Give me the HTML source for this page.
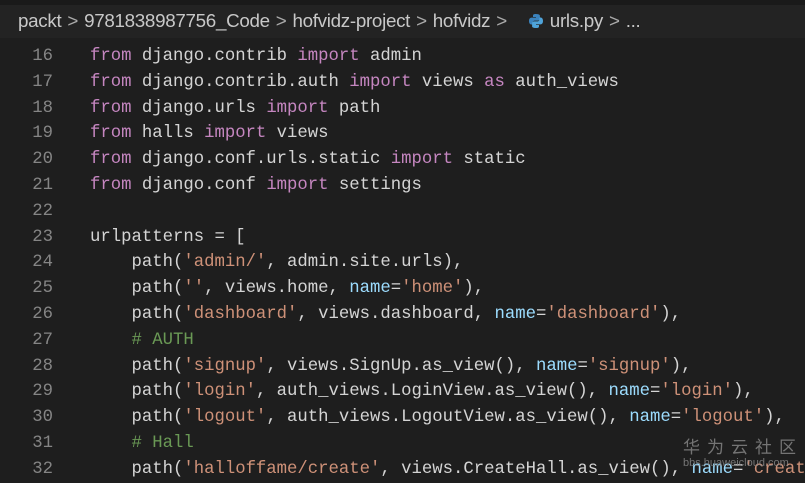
<!DOCTYPE html>
<html><head><style>
body{margin:0;width:805px;height:474px;overflow:hidden;background:#1e1e1e;font-family:"Liberation Mono",monospace;position:relative}
.top{position:absolute;left:0;top:0;width:805px;height:5px;background:#1a1a1a}
.bc{position:absolute;left:0;top:5px;width:805px;height:33px;background:#232323;color:#c8c8c8;font:18.8px "Liberation Sans",sans-serif;line-height:32px;white-space:nowrap;padding-left:18px;box-sizing:border-box;letter-spacing:-0.3px}
.bc .s{color:#aaa;margin:0 6px}
.code{position:absolute;left:0;top:44px;width:805px;overflow:hidden;font-size:17.3px;line-height:25.8px;color:#d4d4d4;white-space:pre}
.ln{display:inline-block;width:53px;text-align:right;color:#858585;margin-right:37px}
.k{color:#c586c0}.s2{color:#ce9178}.p{color:#9cdcfe}.c{color:#6a9955}
.wm{position:absolute;left:683px;top:433px;color:#8a8a8a;font:17px "Noto Sans CJK SC",sans-serif;letter-spacing:7px;opacity:.8}
.wm2{position:absolute;left:683px;top:457px;color:#8a8a8a;font:11px "Liberation Sans",sans-serif;opacity:.8}
</style></head><body>
<div class="top"></div>
<div class="bc">packt<span class="s">&gt;</span>9781838987756_Code<span class="s">&gt;</span>hofvidz-project<span class="s">&gt;</span>hofvidz<span class="s">&gt;</span> <svg width="16" height="16" viewBox="0 0 16 16" style="vertical-align:-2px;margin:0 6px 0 10px"><path d="M7.8 1C5 1 5 2.3 5 2.3V4h3v.6H3.6S1 4.4 1 8s2.3 3.5 2.3 3.5h1.3V9.8S4.5 7.6 6.8 7.6h3s2.1 0 2.1-2V2.8S12.3 1 7.8 1z" fill="#3b83bd"/><path d="M8.2 15c2.8 0 2.8-1.3 2.8-1.3V12H8v-.6h4.4S15 11.6 15 8s-2.3-3.5-2.3-3.5h-1.3v1.7s.1 2.2-2.2 2.2h-3s-2.1 0-2.1 2v2.8S3.7 15 8.2 15z" fill="#4fa3d9"/></svg>urls.py<span class="s">&gt;</span>...</div>
<div class="code"><span class="ln">16</span><span class="k">from</span> django.contrib <span class="k">import</span> admin
<span class="ln">17</span><span class="k">from</span> django.contrib.auth <span class="k">import</span> views <span class="k">as</span> auth_views
<span class="ln">18</span><span class="k">from</span> django.urls <span class="k">import</span> path
<span class="ln">19</span><span class="k">from</span> halls <span class="k">import</span> views
<span class="ln">20</span><span class="k">from</span> django.conf.urls.static <span class="k">import</span> static
<span class="ln">21</span><span class="k">from</span> django.conf <span class="k">import</span> settings
<span class="ln">22</span>
<span class="ln">23</span>urlpatterns = [
<span class="ln">24</span>    path(<span class="s2">'admin/'</span>, admin.site.urls),
<span class="ln">25</span>    path(<span class="s2">''</span>, views.home, <span class="p">name</span>=<span class="s2">'home'</span>),
<span class="ln">26</span>    path(<span class="s2">'dashboard'</span>, views.dashboard, <span class="p">name</span>=<span class="s2">'dashboard'</span>),
<span class="ln">27</span>    <span class="c"># AUTH</span>
<span class="ln">28</span>    path(<span class="s2">'signup'</span>, views.SignUp.as_view(), <span class="p">name</span>=<span class="s2">'signup'</span>),
<span class="ln">29</span>    path(<span class="s2">'login'</span>, auth_views.LoginView.as_view(), <span class="p">name</span>=<span class="s2">'login'</span>),
<span class="ln">30</span>    path(<span class="s2">'logout'</span>, auth_views.LogoutView.as_view(), <span class="p">name</span>=<span class="s2">'logout'</span>),
<span class="ln">31</span>    <span class="c"># Hall</span>
<span class="ln">32</span>    path(<span class="s2">'halloffame/create'</span>, views.CreateHall.as_view(), <span class="p">name</span>=<span class="s2">'create'</span>),</div>
<div class="wm">华为云社区</div>
<div class="wm2">bbs.huaweicloud.com</div>
</body></html>
